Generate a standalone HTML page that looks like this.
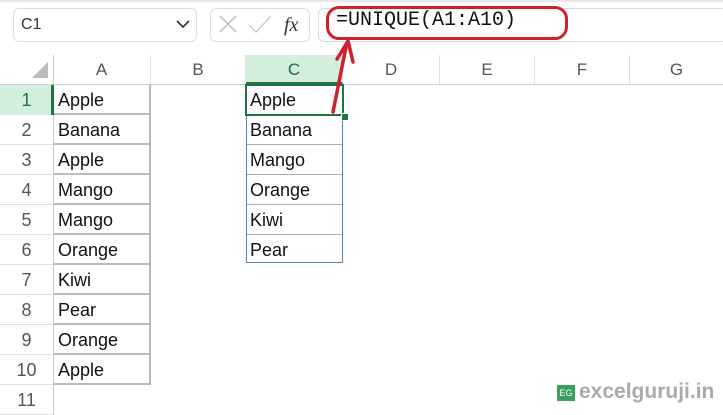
<!DOCTYPE html>
<html><head><style>
body{margin:0;width:723px;height:415px;background:#fff;position:relative;overflow:hidden;font-family:"Liberation Sans",sans-serif}
.a{position:absolute}
.cell{position:absolute;font-size:18px;color:#111;line-height:30px;padding-left:4px;box-sizing:border-box}
.rh{position:absolute;left:0;width:53px;text-align:center;font-size:18px;color:#555;line-height:30px}
.ch{position:absolute;top:55px;height:29px;line-height:29px;text-align:center;font-size:17px;color:#555;border-right:1px solid #e0e0e0;box-sizing:border-box}
</style></head><body>
<div class="a" style="left:0;top:0;width:723px;height:2px;background:#e8e8e8"></div>
<div class="a" style="left:13px;top:8px;width:184px;height:34px;border:1px solid #ddd;border-radius:6px;box-sizing:border-box;font-size:16px;line-height:32px;padding-left:7px;color:#333">C1</div>
<svg class="a" style="left:176px;top:19px" width="14" height="10"><path d="M1 2 L7 8 L13 2" stroke="#333" stroke-width="1.6" fill="none"/></svg>
<div class="a" style="left:210px;top:8px;width:100px;height:34px;border:1px solid #ddd;border-radius:6px;box-sizing:border-box"></div>
<svg class="a" style="left:216px;top:13px" width="90" height="26"><path d="M4 3 L20 19 M20 3 L4 19" stroke="#bbb" stroke-width="1.5"/><path d="M33 12 L40 19 L55 3" stroke="#ccc" stroke-width="1.5" fill="none"/><text x="68" y="18" font-family="Liberation Serif" font-style="italic" font-size="20" fill="#333">fx</text></svg>
<div class="a" style="left:318px;top:8px;width:410px;height:34px;border:1px solid #ddd;border-radius:6px;box-sizing:border-box"></div>
<div class="a" style="left:326px;top:6px;width:242px;height:34px;border:3px solid #d0202f;border-radius:13px;box-sizing:border-box"></div>
<div class="a" style="left:336px;top:9px;font-family:'Liberation Mono',monospace;font-size:20px;color:#111">=UNIQUE(A1:A10)</div>
<div class="a" style="left:0;top:55px;width:723px;height:29px;border-bottom:1px solid #ccc"></div>
<svg class="a" style="left:30px;top:60px" width="20" height="20"><path d="M18 2 L18 18 L2 18 Z" fill="#bbb"/></svg>
<div class="a" style="left:53px;top:55px;width:1px;height:360px;background:#ccc"></div>
<div class="ch" style="left:53px;width:98px">A</div>
<div class="ch" style="left:151px;width:95px">B</div>
<div class="ch" style="left:246px;width:97px;background:#d3eedb;color:#1f6b3a;border-bottom:2px solid #217346">C</div>
<div class="ch" style="left:343px;width:97px">D</div>
<div class="ch" style="left:440px;width:95px">E</div>
<div class="ch" style="left:535px;width:95px">F</div>
<div class="ch" style="left:630px;width:93px;border:none">G</div>
<div class="a" style="left:0;top:85px;width:53px;height:30px;background:#d3eedb"></div>
<div class="a" style="left:51px;top:85px;width:3px;height:30px;background:#217346"></div>
<div class="rh" style="top:85px;color:#217346">1</div><div class="rh" style="top:115px">2</div><div class="rh" style="top:145px">3</div><div class="rh" style="top:175px">4</div><div class="rh" style="top:205px">5</div><div class="rh" style="top:235px">6</div><div class="rh" style="top:265px">7</div><div class="rh" style="top:295px">8</div><div class="rh" style="top:325px">9</div><div class="rh" style="top:355px">10</div><div class="rh" style="top:385px">11</div>
<div class="a" style="left:0;top:115px;width:53px;height:300px;background:repeating-linear-gradient(to bottom,transparent 0,transparent 29px,#e0e0e0 29px,#e0e0e0 30px)"></div>
<div class="a" style="left:54px;top:85px;width:97px;height:300px;border-right:2px solid #bbb;box-sizing:border-box;background:repeating-linear-gradient(to bottom,transparent 0,transparent 28px,#bbb 28px,#bbb 30px)"></div>
<div class="cell" style="left:54px;top:85px">Apple</div><div class="cell" style="left:54px;top:115px">Banana</div><div class="cell" style="left:54px;top:145px">Apple</div><div class="cell" style="left:54px;top:175px">Mango</div><div class="cell" style="left:54px;top:205px">Mango</div><div class="cell" style="left:54px;top:235px">Orange</div><div class="cell" style="left:54px;top:265px">Kiwi</div><div class="cell" style="left:54px;top:295px">Pear</div><div class="cell" style="left:54px;top:325px">Orange</div><div class="cell" style="left:54px;top:355px">Apple</div>
<div class="a" style="left:246px;top:85px;width:97px;height:178px;border:1px solid #5b7fb0;border-top:none;box-sizing:border-box;background:repeating-linear-gradient(to bottom,transparent 0,transparent 29px,#aab 29px,#aab 30px)"></div>
<div class="a" style="left:245px;top:84px;width:99px;height:32px;border:2px solid #217346;box-sizing:border-box;background:#fff"></div>
<div class="a" style="left:341px;top:113px;width:6px;height:6px;background:#217346;border:1px solid #fff"></div>
<div class="cell" style="left:246px;top:85px">Apple</div><div class="cell" style="left:246px;top:115px">Banana</div><div class="cell" style="left:246px;top:145px">Mango</div><div class="cell" style="left:246px;top:175px">Orange</div><div class="cell" style="left:246px;top:205px">Kiwi</div><div class="cell" style="left:246px;top:235px">Pear</div>
<svg class="a" style="left:320px;top:35px" width="40" height="85"><path d="M13 77 L26 12" stroke="#d0202f" stroke-width="3.5" stroke-linecap="round"/><path d="M17 24 L28 6 L33 27" stroke="#d0202f" stroke-width="3.5" fill="none" stroke-linecap="round" stroke-linejoin="round"/></svg>
<div class="a" style="left:557px;top:385px;width:18px;height:16px;background:#3aa05a;color:#fff;font-size:9px;line-height:16px;text-align:center">EG</div>
<div class="a" style="left:579px;top:380px;font-size:21px;font-weight:bold;color:#aaa">excelguruji.in</div>
</body></html>
